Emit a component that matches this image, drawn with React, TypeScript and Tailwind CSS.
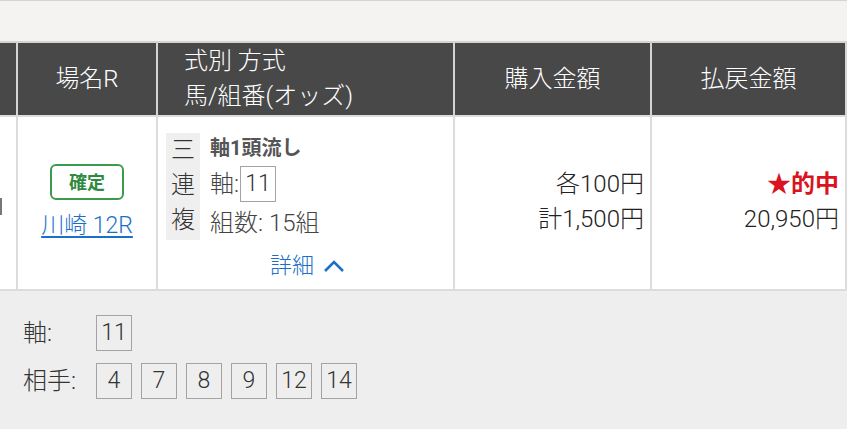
import React from "react";

const font = { fontFamily: 'Roboto, "Noto Sans CJK JP", sans-serif' };

function NumBox({ n, className = "" }: { n: string; className?: string }) {
  return (
    <span
      className={
        "inline-flex h-[36px] w-[36px] items-center justify-center border border-[#a3a3a3] text-[23px] font-light text-[#333] " +
        className
      }
    >
      {n}
    </span>
  );
}

export default function App() {
  return (
    <div className="h-[429px] w-[847px] overflow-hidden bg-white" style={font}>
      {/* 上部の余白 */}
      <div className="h-[43px] border-t border-b-2 border-[#d4d4d4] bg-[#f4f3f1]" />

      {/* ヘッダー */}
      <div className="flex h-[72px] bg-[#484848] text-[24px] font-light text-white">
        <div className="w-[16px]" />
        <div className="flex w-[140px] items-center justify-center border-l-2 border-[#d4d4d4]">場名R</div>
        <div className="flex w-[297px] flex-col justify-center border-l-2 border-[#d4d4d4] pl-[26px] leading-[35px]">
          <span>式別 方式</span>
          <span>馬/組番(オッズ)</span>
        </div>
        <div className="flex w-[197px] items-center justify-center border-l-2 border-[#d4d4d4]">購入金額</div>
        <div className="flex w-[195px] items-center justify-center border-l-2 border-[#d4d4d4]">払戻金額</div>
        <div className="w-[2px] bg-[#d4d4d4]" />
      </div>

      {/* 明細行 */}
      <div className="flex h-[176px] border-t-2 border-b-2 border-[#dcdcdc] text-[24px] font-light text-[#222]">
        <div className="flex w-[16px] items-center">
          <div className="mt-[6px] h-[17px] w-[2px] bg-[#777]" />
        </div>
        <div className="flex w-[140px] flex-col items-center justify-center gap-[12px] border-l-2 border-[#dcdcdc] pb-[2px]">
          <span className="flex h-[36px] w-[74px] items-center justify-center rounded-[6px] border-2 border-[#3b9a4c] text-[18px] font-bold text-[#2e8a3f]">
            確定
          </span>
          <a className="text-[23px] leading-[28px] text-[#1b6fc8] underline underline-offset-[3px]">
            川崎 12R
          </a>
        </div>
        <div className="flex w-[297px] flex-col border-l-2 border-[#dcdcdc] pl-[8px] pt-[16px]">
          <div className="flex gap-[10px]">
            <div className="flex w-[34px] flex-col items-center bg-[#efefef] text-[24px] leading-[35px] text-[#333]">
              <span>三</span>
              <span>連</span>
              <span>複</span>
            </div>
            <div className="flex flex-col text-[#444]">
              <span className="text-[20px] font-bold leading-[30px] text-[#555]">軸1頭流し</span>
              <span className="mt-[3px] flex items-center">
                軸:<NumBox n="11" className="ml-[1px] h-[35px]" />
              </span>
              <span className="mt-[5px] leading-[33px]">組数: 15組</span>
            </div>
          </div>
          <div className="mt-[9px] flex items-center justify-center pr-[4px] text-[22px] text-[#1b6fc8]">
            詳細
            <svg width="22" height="14" viewBox="0 0 22 14" className="ml-[9px]">
              <path d="M2 12 L11 3 L20 12" stroke="#1b6fc8" strokeWidth="2.6" fill="none" />
            </svg>
          </div>
        </div>
        <div className="flex w-[197px] flex-col items-end justify-center border-l-2 border-[#dcdcdc] pr-[6px] pb-[3px] leading-[35px]">
          <span>各100円</span>
          <span>計1,500円</span>
        </div>
        <div className="flex w-[195px] flex-col items-end justify-center border-l-2 border-[#dcdcdc] pr-[6px] pb-[3px] leading-[35px]">
          <span className="font-bold text-[#d9141e]">★的中</span>
          <span>20,950円</span>
        </div>
        <div className="w-[2px] bg-[#dcdcdc]" />
      </div>

      {/* 詳細エリア */}
      <div className="flex h-[140px] flex-col gap-[12px] bg-[#eeeeee] pl-[23px] pt-[24px] text-[24px] font-light text-[#333]">
        <div className="flex items-center">
          <span className="w-[73px]">軸:</span>
          <NumBox n="11" />
        </div>
        <div className="flex items-center">
          <span className="w-[73px]">相手:</span>
          <div className="flex gap-[9px]">
            {["4", "7", "8", "9", "12", "14"].map((n) => (
              <NumBox key={n} n={n} />
            ))}
          </div>
        </div>
      </div>
    </div>
  );
}
